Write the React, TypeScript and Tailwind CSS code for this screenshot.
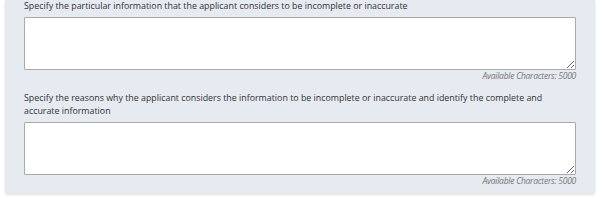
import React from "react";

const fields = [
  {
    id: "incomplete-info",
    label:
      "Specify the particular information that the applicant considers to be incomplete or inaccurate",
  },
  {
    id: "reasons",
    label:
      "Specify the reasons why the applicant considers the information to be incomplete or inaccurate and identify the complete and accurate information",
  },
];

const App: React.FC = () => {
  return (
    <div className="w-[600px] h-[200px] bg-white font-['Open_Sans',sans-serif] overflow-hidden">
      <div className="mx-[5px] bg-[#e6eaf1] rounded-b-[3px] shadow-[0_2px_3px_rgba(0,0,0,0.12)] px-[19px] pb-[6px]">
        {fields.map((f, i) => (
          <div key={f.id} className={i === 0 ? "" : "mt-[10px]"}>
            <label
              htmlFor={f.id}
              className="block text-[8.85px] leading-[13px] text-[#333333] mb-[4px]"
            >
              {f.label}
            </label>
            <textarea
              id={f.id}
              className="block w-full h-[53px] bg-white border border-[#a9a9a9] rounded-[1px] resize-y outline-none"
            />
            <div className="text-right text-[8.5px] leading-[12px] italic tracking-[-0.25px] text-[#777777]">
              Available Characters: 5000
            </div>
          </div>
        ))}
      </div>
    </div>
  );
};

export default App;
